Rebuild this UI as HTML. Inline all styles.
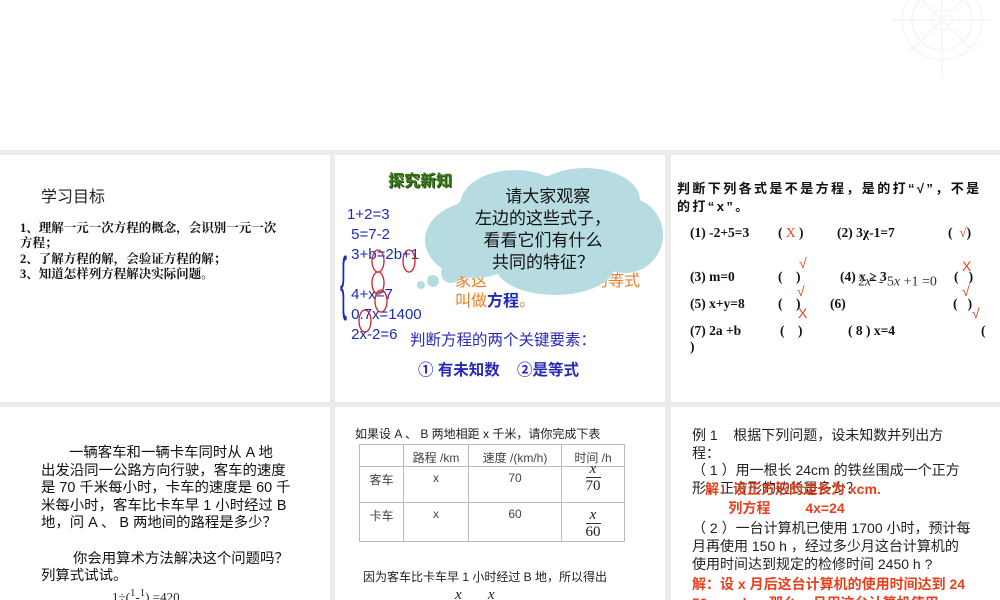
<!DOCTYPE html>
<html><head><meta charset="utf-8"><style>
*{margin:0;padding:0}
body{width:1000px;height:600px;overflow:hidden;background:#fff;position:relative;font-family:"Liberation Sans","Noto Sans CJK SC",sans-serif;}
.bg{position:absolute;left:0;top:150px;width:1000px;height:450px;background:#ebebeb}
.s{position:absolute;background:#fff;overflow:hidden}
.t{position:absolute;white-space:nowrap}
.serif{font-family:"Liberation Serif","Noto Serif CJK SC",serif}
.blue{color:#1f2bb8}
.red{color:#e8401c}
table{border-collapse:collapse;position:absolute;font-size:12px;color:#444}
td{border:1px solid #bbb;vertical-align:top;text-align:center;padding-top:4px}
.fr{display:inline-block;text-align:center;line-height:16px;font-family:"Liberation Serif",serif;font-size:15px;color:#222}
.fr span{display:block}
.fr .n{border-bottom:1px solid #333;font-style:italic}
</style></head><body>
<svg style="position:absolute;left:880px;top:0" width="120" height="80"><g fill="none" stroke="#f7f7f7" stroke-width="2"><circle cx="62" cy="20" r="40"/><circle cx="62" cy="20" r="30"/><circle cx="62" cy="20" r="10"/><path d="M12 20H112M62 -30V78M30 -12L94 52M94 -12L30 52"/></g></svg>
<div class="bg"></div>

<!-- slide 1 -->
<div class="s" style="left:0;top:155px;width:330px;height:247px">
 <div class="t" style="left:41px;top:28px;font-size:16px;color:#222">学习目标</div>
 <div class="t serif" style="left:20px;top:66px;font-size:12.5px;line-height:15.3px;color:#111;font-weight:bold">1、理解一元一次方程的概念，会识别一元一次<br>方程；<br>2、了解方程的解，会验证方程的解；<br>3、知道怎样列方程解决实际问题。</div>
</div>

<!-- slide 2 -->
<div class="s" style="left:335px;top:155px;width:330px;height:247px">
 <div class="t" style="left:53px;top:12px;font-size:16px;font-weight:bold;color:#3a7a1a;text-shadow:1px 1px 0 #1c4a0a">探究新知</div>
 <div class="t blue" style="left:12px;top:50px;font-size:15px;line-height:20px">1+2=3<br>&nbsp;5=7-2<br>&nbsp;3+b=2b+1<br><br>&nbsp;4+x=7<br>&nbsp;0.7x=1400<br>&nbsp;2x-2=6</div>
 <div class="t blue" style="left:5px;top:92px;font-size:70px;line-height:70px;transform:scaleX(.3);transform-origin:left;font-weight:100">{</div>
 <svg style="position:absolute;left:0;top:0" width="330" height="247"><g fill="none" stroke="#d0202a" stroke-width="1.3"><ellipse cx="43" cy="106" rx="6" ry="11"/><ellipse cx="74" cy="106" rx="6" ry="11"/><ellipse cx="43" cy="128" rx="6" ry="11"/><ellipse cx="46" cy="146" rx="6" ry="11"/><ellipse cx="30" cy="166" rx="6" ry="11"/></g></svg>
 <div class="t" style="left:120px;top:117px;font-size:16px;line-height:20px;color:#e8802a">家这<span style="margin-left:105px">的等式</span><br>叫做<span class="blue" style="font-weight:bold">方程</span>。</div>
 <svg style="position:absolute;left:80px;top:10px" width="250" height="140"><g fill="#b6dce2"><ellipse cx="130" cy="62" rx="100" ry="48"/><ellipse cx="100" cy="40" rx="55" ry="35"/><ellipse cx="170" cy="35" rx="55" ry="32"/><ellipse cx="60" cy="75" rx="50" ry="38"/><ellipse cx="210" cy="70" rx="38" ry="38"/><ellipse cx="140" cy="100" rx="60" ry="30"/><circle cx="36" cy="108" r="10"/><circle cx="18" cy="116" r="6"/><circle cx="6" cy="120" r="4"/></g></svg>
 <div class="t" style="left:140px;top:31px;font-size:17px;line-height:22px;color:#111;text-align:center">&nbsp;&nbsp;请大家观察<br>左边的这些式子，<br>看看它们有什么<br>共同的特征？</div>
 <div class="t" style="left:75px;top:173px;font-size:15.5px;color:#2a2ab8">判断方程的两个关键要素：</div>
 <div class="t" style="left:83px;top:203px;font-size:15.5px;color:#2a2ab8;font-weight:bold">① 有未知数 &nbsp;&nbsp; ②是等式</div>
</div>

<!-- slide 3 -->
<div class="s" style="left:671px;top:155px;width:329px;height:247px">
 <div class="t" style="left:6px;top:25px;font-size:13px;line-height:18px;font-weight:bold;color:#111;letter-spacing:2.4px">判断下列各式是不是方程，是的打“√”，不是<br>的打“x”。</div>
 <div class="serif" style="position:absolute;left:19px;top:70px;font-size:13.5px;font-weight:bold;color:#111">
  <div class="t" style="top:0">(1) -2+5=3</div><div class="t" style="left:88px;top:0">( <span class="red" style="font-weight:normal">X</span> )</div>
  <div class="t" style="left:147px;top:0">(2) 3χ-1=7</div><div class="t" style="left:258px;top:0">( &nbsp;<span class="red" style="font-weight:normal">√</span>)</div>
  <div class="t" style="top:44px">(3) m=0</div><div class="t" style="left:88px;top:44px">( &nbsp;&nbsp; )</div>
  <div class="t" style="left:150px;top:44px">(4) x ≥ 3</div><div class="t" style="left:264px;top:44px">( &nbsp; )</div>
  <div class="t" style="top:71px">(5) x+y=8</div><div class="t" style="left:88px;top:71px">( &nbsp;&nbsp; )</div>
  <div class="t" style="left:140px;top:71px">(6)</div><div class="t" style="left:263px;top:71px">( &nbsp; )</div>
  <div class="t" style="top:98px">(7) 2a +b</div><div class="t" style="left:90px;top:98px">( &nbsp;&nbsp; )</div>
  <div class="t" style="left:158px;top:98px">( 8 ) x=4</div><div class="t" style="left:291px;top:98px">(</div>
  <div class="t" style="top:114px">)</div>
 </div>
 <div class="t" style="left:187px;top:118px;font-size:14px;color:#333;font-family:'Liberation Serif',serif">2<i>x</i><sup style="font-size:8px">2</sup> - 5<i>x</i> +1 =0</div>
 <div class="t red" style="left:128px;top:100px;font-size:14px">√</div>
 <div class="t red" style="left:126px;top:128px;font-size:14px">√</div>
 <div class="t red" style="left:127px;top:150px;font-size:14px">X</div>
 <div class="t red" style="left:291px;top:103px;font-size:14px">X</div>
 <div class="t red" style="left:291px;top:128px;font-size:14px">√</div>
 <div class="t red" style="left:301px;top:150px;font-size:14px">√</div>
</div>

<!-- slide 4 -->
<div class="s" style="left:0;top:407px;width:330px;height:193px">
 <div class="t" style="left:41px;top:38px;font-size:14.4px;line-height:17.6px;color:#111">&nbsp;&nbsp;&nbsp;&nbsp;&nbsp;&nbsp;&nbsp;一辆客车和一辆卡车同时从 A 地<br>出发沿同一公路方向行驶，客车的速度<br>是 70 千米每小时，卡车的速度是 60 千<br>米每小时，客车比卡车早 1 小时经过 B<br>地，问 A 、 B 两地间的路程是多少？<br><br>&nbsp;&nbsp;&nbsp;&nbsp;&nbsp;&nbsp;&nbsp;&nbsp;你会用算术方法解决这个问题吗？<br>列算式试试。</div>
 <div class="t serif" style="left:112px;top:180px;font-size:13px;color:#222">1÷(<sup>1</sup>-<sup>1</sup>) =420</div>
</div>

<!-- slide 5 -->
<div class="s" style="left:335px;top:407px;width:330px;height:193px">
 <div class="t" style="left:20px;top:18px;font-size:12px;color:#222">如果设 A 、 B 两地相距 x 千米，请你完成下表</div>
 <table style="left:24px;top:37px;width:266px">
  <tr style="height:22px"><td style="width:43px"></td><td style="width:64px">路程 /km</td><td style="width:92px">速度 /(km/h)</td><td>时间 /h</td></tr>
  <tr style="height:36px"><td>客车</td><td>x</td><td>70</td><td style="padding-top:0"><div class="fr" style="margin-top:-6px"><span class="n">x</span><span>70</span></div></td></tr>
  <tr style="height:39px"><td>卡车</td><td>x</td><td>60</td><td><div class="fr"><span class="n">x</span><span>60</span></div></td></tr>
 </table>
 <div class="t" style="left:28px;top:161px;font-size:12px;color:#222">因为客车比卡车早 1 小时经过 B 地，所以得出</div>
 <div class="t serif" style="left:120px;top:180px;font-size:15px;font-style:italic;color:#222">x&nbsp;&nbsp;&nbsp;&nbsp;&nbsp;&nbsp;&nbsp;x</div>
</div>

<!-- slide 6 -->
<div class="s" style="left:671px;top:407px;width:329px;height:193px">
 <div class="t" style="left:21px;top:20px;font-size:14px;line-height:17.5px;color:#222">例 1 &nbsp;&nbsp;&nbsp;根据下列问题，设未知数并列出方<br>程：<br>（ 1 ）用一根长 24cm 的铁丝围成一个正方<br>形，正方形的边长是多少？</div>
 <div class="t red" style="left:34px;top:73px;font-size:14px;font-weight:bold;line-height:19px">解：设正方形的边长为 xcm.<br>&nbsp;&nbsp;&nbsp;&nbsp;&nbsp;&nbsp;列方程 &nbsp;&nbsp;&nbsp;&nbsp;&nbsp;&nbsp;&nbsp;&nbsp;4x=24</div>
 <div class="t" style="left:21px;top:112px;font-size:14px;line-height:18px;color:#222">（ 2 ）一台计算机已使用 1700 小时，预计每<br>月再使用 150 h ，经过多少月这台计算机的<br>使用时间达到规定的检修时间 2450 h ?</div>
 <div class="t red" style="left:21px;top:168px;font-size:14px;line-height:19px;font-weight:bold">解：设 x 月后这台计算机的使用时间达到 24<br>50 &nbsp;&nbsp;&nbsp;&nbsp;&nbsp;&nbsp;&nbsp;&nbsp;h ，那么 x 月用这台计算机使用</div>
</div>
</body></html>
